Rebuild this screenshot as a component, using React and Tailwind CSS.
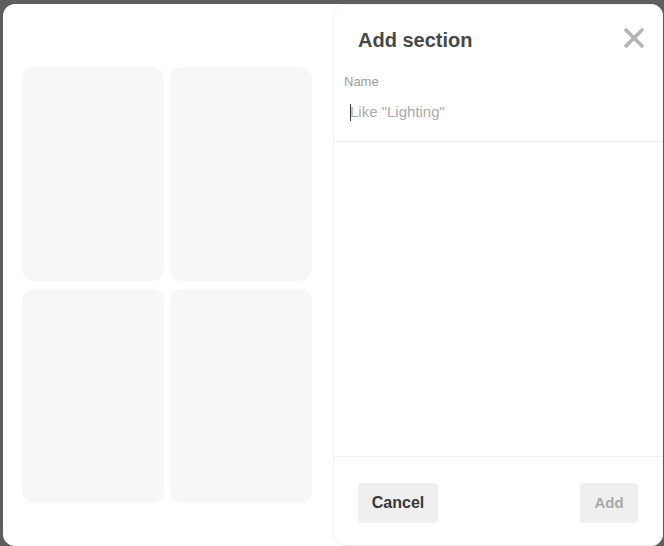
export default function App() {
  return (
    <main
      className="relative w-[664px] h-[546px] overflow-hidden bg-[#5e5e5e]"
      style={{ fontFamily: '"Liberation Sans", Arial, sans-serif' }}
    >
      <div className="pl-[3px] pt-[4px]">
        <div className="flex w-[660px] h-[542px] bg-white rounded-xl">
          <div className="w-[330px] pt-[63px] pl-[19px] pr-[21px]">
            <div className="grid grid-cols-2 gap-x-[6px] gap-y-[8px]">
              <div className="h-[214px] rounded-xl bg-[#f7f7f7]" />
              <div className="h-[214px] rounded-xl bg-[#f7f7f7]" />
              <div className="h-[214px] rounded-xl bg-[#f7f7f7]" />
              <div className="h-[214px] rounded-xl bg-[#f7f7f7]" />
            </div>
          </div>

          <div className="flex flex-col w-[330px] h-full border border-[#efefef] rounded-xl">
            <div className="flex items-start justify-between pt-[23px] pl-[24px] pr-[17px]">
              <h2 className="text-[20px] leading-[24px] font-bold text-[#484848]">Add section</h2>
              <button className="text-[#b4b4b4]">
                <svg width="22" height="20" viewBox="0 0 22 20" fill="none" stroke="currentColor" strokeWidth="3.6">
                  <path d="M2 1 L20 19 M20 1 L2 19" />
                </svg>
              </button>
            </div>

            <label className="mt-[22px] ml-[10px] text-[13px] leading-[16px] text-[#9e9e9e]">Name</label>
            <div className="relative mt-[12px] ml-[16px] h-[20px] text-[15px] leading-[20px] text-[#ababab]">
              Like "Lighting"
              <span className="absolute left-0 top-[2px] w-px h-[17px] bg-[#333]" />
            </div>

            <div className="mt-[19px] border-t border-[#efefef] flex-1" />

            <div className="flex items-center justify-between h-[89px] border-t border-[#efefef] px-[24px] pt-[4px]">
              <button className="w-[80px] h-[40px] rounded bg-[#efefef] text-[16px] font-bold text-[#383838]">
                Cancel
              </button>
              <button className="w-[58px] h-[40px] rounded bg-[#efefef] text-[15px] font-bold text-[#a9a9a9]">
                Add
              </button>
            </div>
          </div>
        </div>
      </div>
    </main>
  );
}
